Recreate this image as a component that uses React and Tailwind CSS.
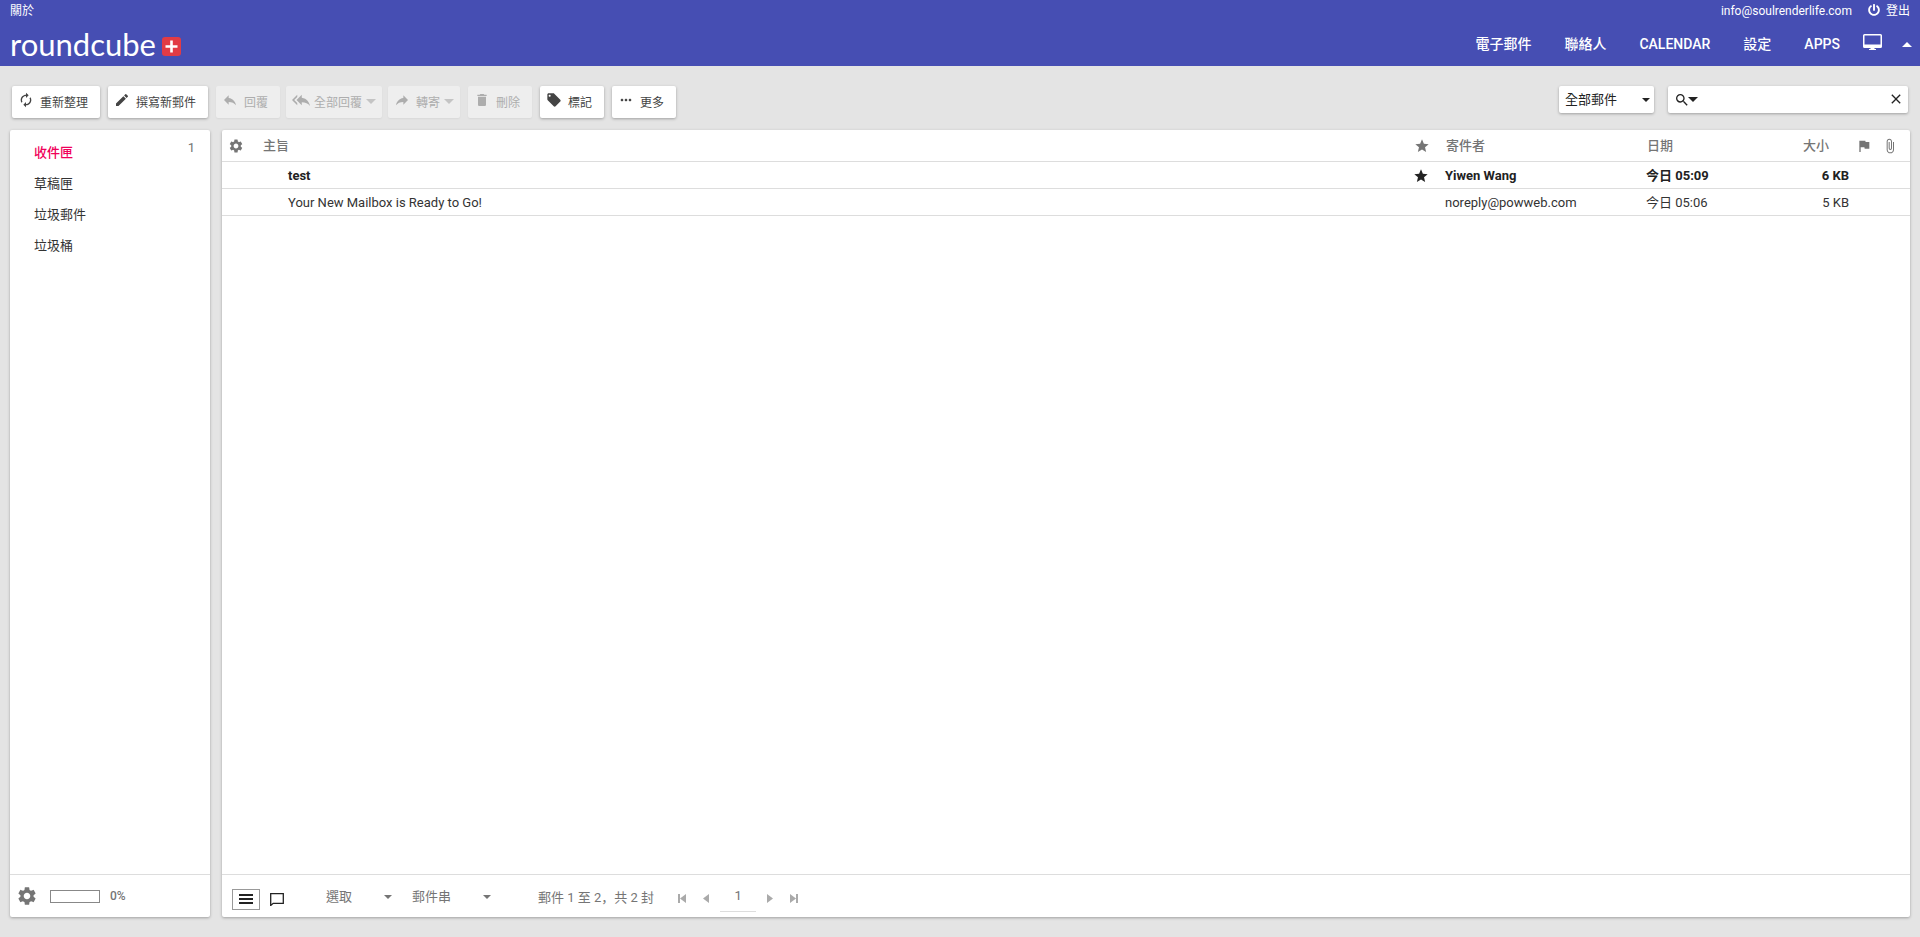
import { useState } from 'react';
import { FaPowerOff } from 'react-icons/fa';
import {
  MdAttachFile,
  MdAutorenew,
  MdClose,
  MdDelete,
  MdEdit,
  MdFlag,
  MdLocalOffer,
  MdMoreHoriz,
  MdReply,
  MdReplyAll,
  MdSearch,
  MdSettings,
  MdStar,
} from 'react-icons/md';

const navItems = ['電子郵件', '聯絡人', 'CALENDAR', '設定', 'APPS'];

const toolbarItems = [
  { label: '重新整理', icon: <MdAutorenew className="size-4" /> },
  { label: '撰寫新郵件', icon: <MdEdit className="size-4" /> },
  { label: '回覆', icon: <MdReply className="size-4" />, disabled: true },
  { label: '全部回覆', icon: <MdReplyAll className="size-[18px]" />, disabled: true, menu: true },
  { label: '轉寄', icon: <MdReply className="size-4 -scale-x-100" />, disabled: true, menu: true },
  { label: '刪除', icon: <MdDelete className="size-4" />, disabled: true },
  { label: '標記', icon: <MdLocalOffer className="size-4" /> },
  { label: '更多', icon: <MdMoreHoriz className="size-4" /> },
];

const folders = [
  { name: '收件匣', unread: 1 },
  { name: '草稿匣' },
  { name: '垃圾郵件' },
  { name: '垃圾桶' },
];

const messages = [
  { id: 1, subject: 'test', from: 'Yiwen Wang', date: '今日 05:09', size: '6 KB', unread: true, starred: true },
  { id: 2, subject: 'Your New Mailbox is Ready to Go!', from: 'noreply@powweb.com', date: '今日 05:06', size: '5 KB' },
];

function Caret({ className }) {
  return (
    <svg viewBox="0 0 10 5" className={className} fill="currentColor" aria-hidden="true">
      <path d="M0 0h10L5 5z" />
    </svg>
  );
}

function Logo() {
  return (
    <a href="#home" className="flex items-center gap-1.5 font-['Lato'] text-[31px] leading-8 text-white">
      roundcube
      <svg viewBox="0 0 19 19" className="mt-1 size-[19px]" aria-hidden="true">
        <rect width="19" height="19" rx="3" fill="#e23b45" />
        <path d="M9.500 3.500v12M3.500 9.500h12" stroke="#fff" strokeWidth="2.600" />
      </svg>
    </a>
  );
}

function Header() {
  return (
    <header className="flex h-[66px] shrink-0 flex-col bg-[#464eb3] px-2.5 text-white">
      <div className="flex h-[22px] items-center justify-between text-xs">
        <a href="#about">關於</a>
        <div className="flex items-center">
          <span className="mr-4">info@soulrenderlife.com</span>
          <a href="#logout" className="flex items-center gap-1.5">
            <FaPowerOff className="mb-0.5 size-3" />
            登出
          </a>
        </div>
      </div>
      <div className="flex h-11 items-center justify-between">
        <Logo />
        <nav className="flex items-center gap-[33px] text-sm font-medium">
          {navItems.map((item) => (
            <a key={item} href={`#${item}`}>{item}</a>
          ))}
          <div className="-ml-2.5 flex items-center gap-5">
            <button aria-label="Display" className="mb-1">
              <svg viewBox="0 0 19 16" className="h-4 w-[19px]" fill="currentColor">
                <path d="M1.500 0h16A1.500 1.500 0 0 1 19 1.500v11a1.500 1.500 0 0 1-1.500 1.500h-6v1H13v1H6v-1h1.500v-1h-6A1.500 1.500 0 0 1 0 12.500v-11A1.500 1.500 0 0 1 1.500 0zM1.500 1.500v9h16v-9z" />
              </svg>
            </button>
            <button aria-label="Collapse" className="-mr-0.5"><Caret className="h-[5px] w-2.5 rotate-180" /></button>
          </div>
        </nav>
      </div>
    </header>
  );
}

function ToolbarButton({ label, icon, disabled, menu }) {
  return (
    <button
      disabled={disabled}
      className={`flex h-8 items-center rounded-xs pl-2 text-xs ${menu ? '-ml-0.5 pr-1' : 'pr-3'} ${
        disabled ? 'bg-[#eeeeee] text-[#adadad] shadow-xs' : 'bg-white text-[#444444] shadow-[0_1px_3px_rgba(0,0,0,0.3)]'
      }`}
    >
      <span className="-ml-0.5 mb-1 flex w-[22px] items-center">{icon}</span>
      <span className="mt-0.5">{label}</span>
      {menu && <Caret className="ml-1 mb-0.5 mr-0.5 h-[5px] w-2.5 text-[#c4c4c4]" />}
    </button>
  );
}

function Toolbar() {
  const [query, setQuery] = useState('');

  return (
    <div className="flex items-start justify-between px-0.5">
      <div className="flex gap-2">
        {toolbarItems.map((item) => (
          <ToolbarButton key={item.label} {...item} />
        ))}
      </div>
      <div className="flex gap-3.5 text-[#222222]">
        <div className="relative">
          <select
            aria-label="Filter"
            className="h-[27px] w-[95px] appearance-none rounded-xs bg-white pl-1.5 text-[13px] shadow-[0_1px_3px_rgba(0,0,0,0.3)]"
          >
            <option>全部郵件</option>
          </select>
          <Caret className="pointer-events-none absolute right-1 top-3 h-1 w-2" />
        </div>
        <div className="flex h-[27px] w-60 items-center rounded-xs bg-white pl-1.5 pr-1 shadow-[0_1px_3px_rgba(0,0,0,0.3)]">
          <MdSearch className="size-4" />
          <button aria-label="Search options" className="-ml-0.5"><Caret className="h-[5px] w-2.5" /></button>
          <input
            aria-label="Search"
            value={query}
            onChange={(e) => setQuery(e.target.value)}
            className="min-w-0 flex-1 text-[13px] outline-none"
          />
          <button aria-label="Clear" className="mb-0.5" onClick={() => setQuery('')}><MdClose className="size-4" /></button>
        </div>
      </div>
    </div>
  );
}

function Sidebar() {
  return (
    <aside className="flex w-[200px] shrink-0 flex-col rounded-xs bg-white shadow-[0_1px_3px_rgba(0,0,0,0.3)]">
      <ul className="flex-1 pt-[7px]">
        {folders.map((folder) => (
          <li key={folder.name}>
            <a
              href={`#${folder.name}`}
              className={`flex h-[31px] items-center justify-between pl-6 pr-[15px] ${
                folder.unread ? 'font-medium text-[#f0005a]' : 'text-[#333333]'
              }`}
            >
              {folder.name}
              {folder.unread && <span className="mb-2.5 font-normal text-[#757575]">{folder.unread}</span>}
            </a>
          </li>
        ))}
      </ul>
      <div className="flex h-[43px] items-center border-t border-[#dddddd] pl-1.5 text-xs font-medium text-[#757575]">
        <button aria-label="Folder actions"><MdSettings className="size-[22px]" /></button>
        <div className="ml-3 mr-2.5 h-[13px] w-[50px] border border-[#888888]" />
        0%
      </div>
    </aside>
  );
}

function MessageTable() {
  return (
    <table className="w-full table-fixed border-separate border-spacing-0 text-left">
      <colgroup>
        <col className="w-[34px]" />
        <col />
        <col className="w-8" />
        <col className="w-[201px]" />
        <col className="w-[140px]" />
        <col className="w-[70px]" />
        <col className="w-[29px]" />
        <col className="w-8" />
      </colgroup>
      <thead>
        <tr className="h-8 text-[#757575] *:border-b *:border-[#dddddd] *:font-medium">
          <th><button aria-label="List options" className="ml-1.5 block"><MdSettings className="size-4" /></button></th>
          <th className="pl-[7px]">主旨</th>
          <th><MdStar className="ml-2 size-4" /></th>
          <th className="pl-2">寄件者</th>
          <th className="pl-2">日期</th>
          <th className="pr-5 text-right">大小</th>
          <th><MdFlag className="ml-[7px] size-4" /></th>
          <th><MdAttachFile className="ml-1 size-4" /></th>
        </tr>
      </thead>
      <tbody>
        {messages.map((msg) => (
          <tr
            key={msg.id}
            className={`h-[27px] *:border-b *:border-[#dddddd] *:pt-0.5 ${msg.unread ? 'font-bold text-[#222222]' : 'text-[#333333]'}`}
          >
            <td />
            <td className="pl-8">{msg.subject}</td>
            <td>{msg.starred && <MdStar className="ml-[7px] size-4" />}</td>
            <td className="pl-[7px]">{msg.from}</td>
            <td className="pl-[7px]">{msg.date}</td>
            <td className="text-right">{msg.size}</td>
            <td />
            <td />
          </tr>
        ))}
      </tbody>
    </table>
  );
}

function FooterSelect({ label, className }) {
  return (
    <div className="relative">
      <select aria-label={label} className={`appearance-none ${className}`}>
        <option>{label}</option>
      </select>
      <Caret className="pointer-events-none absolute right-1 top-[7px] h-1 w-2" />
    </div>
  );
}

function PageArrow({ label, path }) {
  return (
    <button aria-label={label} className="text-[#aaaaaa]">
      <svg viewBox="0 0 8 9" className="h-[9px] w-2" fill="currentColor"><path d={path} /></svg>
    </button>
  );
}

function ListFooter() {
  return (
    <div className="flex h-[43px] items-center border-t border-[#dddddd] pl-2.5 text-[#757575]">
      <button aria-label="List" className="mt-1.5 flex h-[21px] w-7 items-center justify-center border border-[#999999] text-[#222222]">
        <svg viewBox="0 0 14 10" className="h-2.5 w-3.5" fill="currentColor"><path d="M0 0h14v2H0zM0 4h14v2H0zM0 8h14v2H0z" /></svg>
      </button>
      <button aria-label="Threads" className="ml-2.5 mt-1.5 text-[#222222]">
        <svg viewBox="0 0 14 13" className="h-[13px] w-3.5" fill="none" stroke="currentColor" strokeWidth="1.300">
          <path d="M.7.7h12.600v9.600H3.200L.7 12.500z" />
        </svg>
      </button>
      <div className="ml-[42px] mt-0.5 flex gap-4">
        <FooterSelect label="選取" className="w-[70px]" />
        <FooterSelect label="郵件串" className="w-[83px]" />
      </div>
      <span lang="zh-CN" className="ml-[43px] mr-6 mt-1 font-['Roboto','Noto_Sans_CJK_SC',sans-serif]">
        郵件 1 至 2，共 2 封
      </span>
      <div className="mt-1 flex items-center">
        <PageArrow label="First page" path="M0 0h2v9H0zM8 0v9L2 4.500z" />
        <span className="w-4" />
        <PageArrow label="Previous page" path="M7 0v9L1 4.500z" />
        <input
          aria-label="Page"
          defaultValue="1"
          className="mx-2.5 h-7 w-9 border-b border-[#dddddd] pb-1 text-center outline-none"
        />
        <PageArrow label="Next page" path="M1 0v9l6-4.500z" />
        <span className="w-4" />
        <PageArrow label="Last page" path="M6 0H8v9H6zM0 0v9l6-4.500z" />
      </div>
    </div>
  );
}

export default function App() {
  return (
    <div className="flex min-h-screen flex-col bg-[#e4e4e4] font-['Roboto','Noto_Sans_CJK_TC',sans-serif] text-[13px] leading-[18px]">
      <Header />
      <main className="flex flex-1 flex-col gap-3 px-2.5 pb-5 pt-5">
        <Toolbar />
        <div className="flex flex-1 gap-3">
          <Sidebar />
          <section className="flex min-w-0 flex-1 flex-col rounded-xs bg-white shadow-[0_1px_3px_rgba(0,0,0,0.3)]">
            <div className="flex-1"><MessageTable /></div>
            <ListFooter />
          </section>
        </div>
      </main>
    </div>
  );
}
